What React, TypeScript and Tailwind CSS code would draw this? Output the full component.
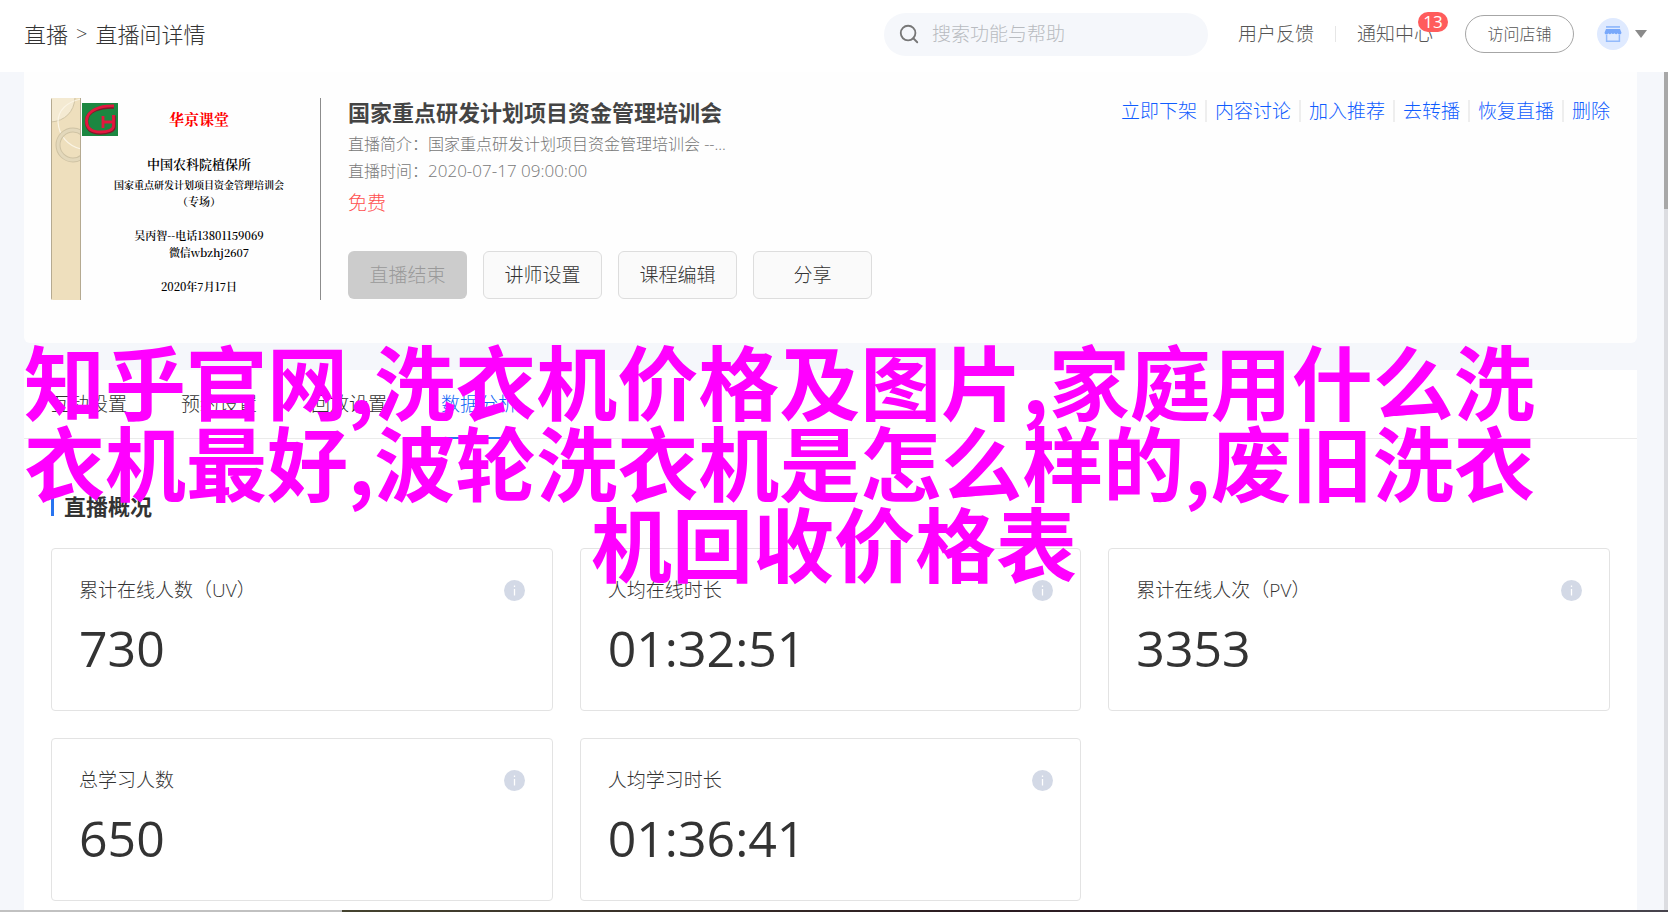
import { Search } from "lucide-react";

const CARDS = [
  { label: "累计在线人数（UV）", value: "730" },
  { label: "人均在线时长", value: "01:32:51" },
  { label: "累计在线人次（PV）", value: "3353" },
  { label: "总学习人数", value: "650" },
  { label: "人均学习时长", value: "01:36:41" },
];

const LINKS = ["立即下架", "内容讨论", "加入推荐", "去转播", "恢复直播", "删除"];
const TABS = ["互动设置", "预约设置", "回放设置", "数据分析"];

function Header() {
  return (
    <header className="flex h-[72px] shrink-0 items-center bg-white pr-[21px] pl-6 text-[19px] text-[#555]">
      <nav aria-label="面包屑" className="flex items-center gap-2 pb-1 text-[22px] text-[#333]">
        <a href="#live">直播</a>
        <span className="text-xl">&gt;</span>
        <span>直播间详情</span>
      </nav>
      <label className="mb-1 ml-auto flex h-[43px] w-[324px] items-center gap-3 rounded-full bg-[#f5f7fb] px-3.5">
        <Search className="size-[22px] shrink-0 text-[#777]" strokeWidth={2} />
        <input
          type="text"
          aria-label="搜索"
          placeholder="搜索功能与帮助"
          className="w-full min-w-0 bg-transparent font-light outline-none placeholder:text-[#b8bbc0]"
        />
      </label>
      <a href="#feedback" className="ml-[30px] pb-1">用户反馈</a>
      <span className="mx-[21px] mb-1 h-4 w-px bg-[#e6e6e6]" />
      <a href="#notice" className="relative pb-1">
        通知中心
        <span className="absolute -top-2 left-[61px] flex h-5 w-[30px] items-center justify-center rounded-full bg-[#ff5c5c] text-[17px] font-normal text-white">
          13
        </span>
      </a>
      <button type="button" className="mb-1 ml-8 h-[38px] w-[109px] rounded-full border border-[#a6a6a6] text-[16px]">
        访问店铺
      </button>
      <button type="button" aria-label="账户" className="mb-1 ml-[23px] flex items-center gap-1.5">
        <svg viewBox="0 0 32 32" className="size-8">
          <circle cx="16" cy="16" r="16" fill="#dfeaff" />
          <path d="M9 8.300h14v1.300H9z" fill="#78a8fb" />
          <path d="M9 11h14l1.500 3.700a2 2 0 0 1-3.800.6 2 2 0 0 1-3.100 0 2 2 0 0 1-3.200 0 2 2 0 0 1-3.100 0 2 2 0 0 1-3.800-.6z" fill="#78a8fb" />
          <path d="M9.600 17v6.300h12.800V17" fill="none" stroke="#93bafc" strokeWidth="1.500" />
        </svg>
        <svg viewBox="0 0 12 8" className="h-2 w-3">
          <path d="M0 0h12L6 8z" fill="#8a8a8a" />
        </svg>
      </button>
    </header>
  );
}

function Poster() {
  return (
    <div className="flex h-[202px] w-[270px] shrink-0 border-r border-[#8c8c8c] font-['Noto_Serif_CJK_SC','Liberation_Serif','Noto_Sans_CJK_SC',serif] font-semibold text-black">
      <svg viewBox="0 0 30 202" className="h-full w-[30px] shrink-0 rounded-l-xs">
        <rect width="30" height="202" fill="#eedfbd" />
        <path d="M0 0h24C24 12 14 24 0 24z" fill="#f4ead2" />
        <path d="M0 24c14-1 23-10 24-24" fill="none" stroke="#cfc3a4" strokeWidth="1" />
        <path d="M7 24C7 12 16 4 30 1M7 24c1 14 10 24 23 27" fill="none" stroke="#fbf5e6" strokeWidth="1.200" />
        <circle cx="22" cy="47" r="15" fill="none" stroke="#cfc3a4" strokeWidth="5" />
        <circle cx="22" cy="47" r="15" fill="none" stroke="#e3d8bb" strokeWidth="3" />
        <path d="M.5 0v202M29.500 0v202" stroke="#b5aa91" strokeWidth="1" />
      </svg>
      <svg viewBox="0 0 36 33" className="mt-[5px] ml-px h-[33px] w-9 shrink-0">
        <rect width="36" height="33" fill="#1c8741" />
        <path d="M32 4C18 3.500 5 8 4.500 18c0 9 6 12 14 12 7 0 13.500-2 13.500-6V12.500" fill="none" stroke="#7d1c2a" strokeWidth="3.400" />
        <path d="M32 3C18 2.500 5 7.500 4.500 17.500c0 9 6 11.500 14 11.500 7 0 13-2 13-6V12M21 13v12M21 19h10" fill="none" stroke="#e3173e" strokeWidth="2.800" />
      </svg>
      <div className="-ml-10 flex flex-1 flex-col items-center pt-[9px] text-[11px] leading-[17px] whitespace-nowrap">
        <p className="text-[15px] leading-6 font-bold text-[#f00]">华京课堂</p>
        <p className="mt-[21px] text-[13px] leading-6">中国农科院植保所</p>
        <p className="text-[10px]">国家重点研发计划项目资金管理培训会</p>
        <p>（专场）</p>
        <p className="mt-[17px]">吴丙智--电话13801159069</p>
        <p className="pl-5">微信wbzhj2607</p>
        <p className="mt-[17px]">2020年7月17日</p>
      </div>
    </div>
  );
}

function Summary() {
  return (
    <section className="flex h-[271px] gap-[27px] rounded-b-md bg-[#fefefe] px-[27px] pt-[26px]">
      <Poster />
      <div className="flex flex-col items-start">
        <h1 className="mb-[5px] text-[22px] leading-7 font-bold text-[#444]">国家重点研发计划项目资金管理培训会</h1>
        <p className="text-[16px] leading-[27px] text-[#777]">直播简介：国家重点研发计划项目资金管理培训会 --...</p>
        <p className="text-[16px] leading-[27px] text-[#777]">
          直播时间：<time className="text-[17px] leading-none">2020-07-17 09:00:00</time>
        </p>
        <p className="mt-0.5 text-[19px] leading-8 text-[#ff5050]">免费</p>
        <div className="mt-8 flex gap-4 text-[19px] text-[#333]">
          <button type="button" disabled className="h-12 w-[119px] rounded-md bg-[#ccc] text-[#999]">直播结束</button>
          {["讲师设置", "课程编辑", "分享"].map((name) => (
            <button key={name} type="button" className="h-12 w-[119px] rounded-md border border-[#ddd] bg-[#fafafa]">
              {name}
            </button>
          ))}
        </div>
      </div>
      <nav aria-label="操作" className="ml-auto flex h-[26px] items-center divide-x-2 divide-[#eee] text-[19px] leading-[22px] text-[#0f5cff]">
        {LINKS.map((name) => (
          <a key={name} href={"#" + name} className="px-2 last:pr-0">{name}</a>
        ))}
      </nav>
    </section>
  );
}

function InfoIcon() {
  return (
    <svg viewBox="0 0 21 21" className="size-[21px]">
      <circle cx="10.5" cy="10.5" r="10.5" fill="#d3d9e6" />
      <path d="M10.500 9v6.500M10.500 5.500v1.600" stroke="#fff" strokeWidth="1.300" />
    </svg>
  );
}

function Analytics() {
  return (
    <section className="bg-white pb-8">
      <div role="tablist" className="flex h-[69px] gap-[54px] border-b border-[#ebebeb] px-[27px] text-[19px] text-[#333]">
        {TABS.map((name) => (
          <button
            key={name}
            type="button"
            role="tab"
            aria-selected={name === "数据分析"}
            className="-mb-px border-b-2 border-transparent pt-0.5 aria-selected:border-[#2874f0] aria-selected:text-[#1468f5]"
          >
            {name}
          </button>
        ))}
      </div>
      <div className="px-[27px]">
        <h2 className="mt-[51px] flex items-center gap-[10px] text-[22px] leading-8 font-bold text-[#333]">
          <span className="h-[19px] w-[3px] bg-[#2874f0]" />
          直播概况
        </h2>
        <div className="mt-[26px] grid grid-cols-3 gap-[27px]">
          {CARDS.map((card) => (
            <article key={card.label} className="h-[163px] rounded-sm border border-[#e3e3e3] px-[27px] pt-[25px] text-[#333]">
              <div className="flex items-center justify-between text-[19px] leading-8">
                <h3>{card.label}</h3>
                <InfoIcon />
              </div>
              <p className="mt-2 text-[50px] leading-[68px] font-normal">{card.value}</p>
            </article>
          ))}
        </div>
      </div>
    </section>
  );
}

export default function App() {
  return (
    <div className="flex h-screen flex-col overflow-hidden bg-[#f5f7fb] font-['Open_Sans','Noto_Sans_CJK_SC',sans-serif] font-light">
      <Header />
      <div className="relative flex min-h-0 flex-1">
        <main className="min-w-0 flex-1 overflow-hidden pr-[27px] pl-6">
          <Summary />
          <div className="h-[27px]" />
          <Analytics />
        </main>
        <div className="w-1 bg-[#dcdde1]">
          <div className="h-[137px] bg-[#a8a8a8]" />
        </div>
        <div className="pointer-events-none absolute inset-x-0 top-[266px] font-['Noto_Sans_CJK_SC',sans-serif] text-[81px] leading-[81px] font-bold whitespace-nowrap text-[#f0f]">
          <p className="pl-6">知乎官网,洗衣机价格及图片,家庭用什么洗</p>
          <p className="pl-6">衣机最好,波轮洗衣机是怎么样的,废旧洗衣</p>
          <p className="text-center">机回收价格表</p>
        </div>
      </div>
      <div className="flex h-0.5 shrink-0">
        <div className="w-[342px] bg-[#c1c1c1]" />
        <div className="flex-1 bg-linear-to-r from-[#45432f] via-[#2a1a20] to-[#47444d]" />
      </div>
    </div>
  );
}
